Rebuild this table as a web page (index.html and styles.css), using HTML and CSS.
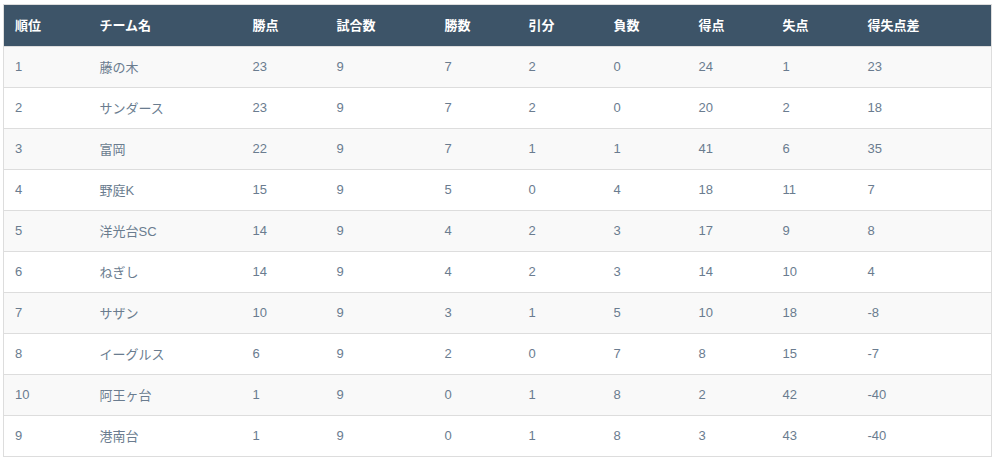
FILE: index.html
```html
<!DOCTYPE html>
<html lang="ja">
<head>
<meta charset="utf-8">
<title>順位表</title>
<link rel="stylesheet" href="styles.css">
</head>
<body>
<div class="wrap">
<table class="standings">
<colgroup>
<col class="c1"><col class="c2"><col class="c3"><col class="c4"><col class="c5"><col class="c6"><col class="c7"><col class="c8"><col class="c9"><col class="c10">
</colgroup>
<thead>
<tr><th>順位</th><th>チーム名</th><th>勝点</th><th>試合数</th><th>勝数</th><th>引分</th><th>負数</th><th>得点</th><th>失点</th><th>得失点差</th></tr>
</thead>
<tbody>
<tr><td>1</td><td>藤の木</td><td>23</td><td>9</td><td>7</td><td>2</td><td>0</td><td>24</td><td>1</td><td>23</td></tr>
<tr><td>2</td><td>サンダース</td><td>23</td><td>9</td><td>7</td><td>2</td><td>0</td><td>20</td><td>2</td><td>18</td></tr>
<tr><td>3</td><td>富岡</td><td>22</td><td>9</td><td>7</td><td>1</td><td>1</td><td>41</td><td>6</td><td>35</td></tr>
<tr><td>4</td><td>野庭K</td><td>15</td><td>9</td><td>5</td><td>0</td><td>4</td><td>18</td><td>11</td><td>7</td></tr>
<tr><td>5</td><td>洋光台SC</td><td>14</td><td>9</td><td>4</td><td>2</td><td>3</td><td>17</td><td>9</td><td>8</td></tr>
<tr><td>6</td><td>ねぎし</td><td>14</td><td>9</td><td>4</td><td>2</td><td>3</td><td>14</td><td>10</td><td>4</td></tr>
<tr><td>7</td><td>サザン</td><td>10</td><td>9</td><td>3</td><td>1</td><td>5</td><td>10</td><td>18</td><td>-8</td></tr>
<tr><td>8</td><td>イーグルス</td><td>6</td><td>9</td><td>2</td><td>0</td><td>7</td><td>8</td><td>15</td><td>-7</td></tr>
<tr><td>10</td><td>阿王ヶ台</td><td>1</td><td>9</td><td>0</td><td>1</td><td>8</td><td>2</td><td>42</td><td>-40</td></tr>
<tr><td>9</td><td>港南台</td><td>1</td><td>9</td><td>0</td><td>1</td><td>8</td><td>3</td><td>43</td><td>-40</td></tr>
</tbody>
</table>
</div>
</body>
</html>
```
FILE: styles.css
```css
html, body {
  margin: 0;
  padding: 0;
  background: #ffffff;
}
.wrap {
  padding: 4px 4px 0 3px;
}
.standings {
  width: 988px;
  border-collapse: collapse;
  table-layout: fixed;
  border: 1px solid #dddddd;
  font-family: "Liberation Sans", Arial, "Noto Sans CJK JP", sans-serif;
  font-size: 13px;
}
.c1 { width: 85px; }
.c2 { width: 153px; }
.c3 { width: 84px; }
.c4 { width: 108px; }
.c5 { width: 84px; }
.c6 { width: 85px; }
.c7 { width: 85px; }
.c8 { width: 84px; }
.c9 { width: 85px; }
.c10 { width: 135px; }
.standings th {
  background: #3d5468;
  color: #ffffff;
  font-weight: bold;
  text-align: left;
  height: 42px;
  padding: 0 0 2px 11px;
  border-bottom: 1px solid #dddddd;
  box-sizing: border-box;
}
.standings td {
  color: #6a7c8f;
  height: 41px;
  padding: 0 0 1px 11px;
  border-bottom: 1px solid #dddddd;
  box-sizing: border-box;
  text-align: left;
}
.standings tbody tr:nth-child(odd) td {
  background: #f9f9f9;
}
```
